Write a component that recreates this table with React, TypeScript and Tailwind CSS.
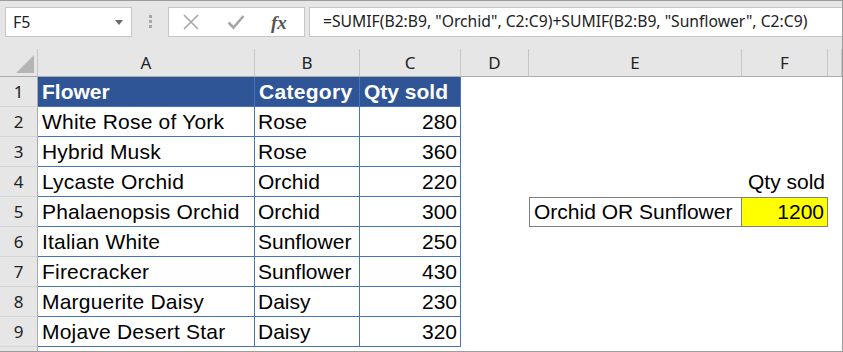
import React from "react";

const ROWS: [string, string, string][] = [
  ["White Rose of York", "Rose", "280"],
  ["Hybrid Musk", "Rose", "360"],
  ["Lycaste Orchid", "Orchid", "220"],
  ["Phalaenopsis Orchid", "Orchid", "300"],
  ["Italian White", "Sunflower", "250"],
  ["Firecracker", "Sunflower", "430"],
  ["Marguerite Daisy", "Daisy", "230"],
  ["Mojave Desert Star", "Daisy", "320"],
];

const COLS = ["A", "B", "C", "D", "E", "F", ""];

const cellFont = { fontFamily: '"Liberation Sans", Arial, sans-serif' };
const uiFont = { fontFamily: '"Noto Sans", "Open Sans", sans-serif' };

function RowHead({ n }: { n: number | string }) {
  return (
    <div
      className="flex h-[30px] items-center justify-center border-r border-b border-r-[#ababab] border-b-[#d4d4d4] bg-[#e6e6e6] text-[17px] text-[#222]"
      style={uiFont}
    >
      {n}
    </div>
  );
}

function Blank() {
  return <div className="h-[30px]" />;
}

export default function App() {
  const filler = (k: string) => [
    <Blank key={k + "d"} />,
    <Blank key={k + "e"} />,
    <Blank key={k + "f"} />,
    <Blank key={k + "g"} />,
  ];

  return (
    <div className="h-[352px] w-[843px] overflow-hidden border-t border-r border-b border-[#9c9c9c] bg-white">
      {/* formula bar */}
      <div className="flex h-[48px] items-start bg-[#e6e6e6] pt-[6px]" style={uiFont}>
        <div className="relative ml-[5px] flex h-[30px] w-[127px] items-center border border-[#c6c6c6] bg-white pl-[7px] text-[16px] text-[#222]">
          F5
          <span className="absolute right-[8px] top-[12px] h-0 w-0 border-x-[4px] border-t-[5px] border-x-transparent border-t-[#6b6b6b]" />
        </div>
        <div className="ml-[17px] mt-[8px] flex flex-col gap-[2px]">
          <span className="h-[3px] w-[3px] bg-[#a6a6a6]" />
          <span className="h-[3px] w-[3px] bg-[#a6a6a6]" />
          <span className="h-[3px] w-[3px] bg-[#a6a6a6]" />
        </div>
        <div className="ml-[16px] flex h-[30px] w-[137px] items-center border border-[#c6c6c6] bg-white">
          <svg width="18" height="18" viewBox="0 0 18 18" className="ml-[13px]">
            <path d="M2 2 L16 16 M16 2 L2 16" stroke="#a6a6a6" strokeWidth="1.6" fill="none" />
          </svg>
          <svg width="18" height="16" viewBox="0 0 18 16" className="ml-[27px]">
            <path d="M1.5 8.5 L6.5 13.5 L16.5 2" stroke="#a6a6a6" strokeWidth="2.6" fill="none" />
          </svg>
          <span
            className="ml-[26px] text-[19px] font-bold italic leading-none text-[#555]"
            style={{ fontFamily: '"Liberation Serif", "Times New Roman", serif' }}
          >
            fx
          </span>
        </div>
        <div className="ml-[4px] flex h-[30px] flex-1 items-center border border-r-0 border-[#c6c6c6] bg-white pl-[13px] text-[15.7px] text-[#222]">
          =SUMIF(B2:B9, "Orchid", C2:C9)+SUMIF(B2:B9, "Sunflower", C2:C9)
        </div>
      </div>

      {/* sheet */}
      <div className="grid grid-cols-[38px_217px_105px_101px_68px_213px_86px_1fr]">
        {/* column headers */}
        <div className="relative h-[28px] border-r border-b border-r-[#c6c6c6] border-b-[#ababab] bg-[#e6e6e6]">
          <span className="absolute right-[3px] bottom-[3px] h-0 w-0 border-b-[18px] border-l-[18px] border-b-[#b5b5b5] border-l-transparent" />
        </div>
        {COLS.map((c, i) => (
          <div
            key={i}
            className="flex h-[28px] items-center justify-center border-r border-b border-r-[#c6c6c6] border-b-[#ababab] bg-[#e6e6e6] text-[17px] text-[#222]"
            style={uiFont}
          >
            {c}
          </div>
        ))}

        {/* row 1: table header */}
        <RowHead n={1} />
        <div
          className="flex h-[30px] items-center border-r border-b border-[#4472c4] bg-[#2f5597] pl-[4px] text-[21px] font-bold text-white"
          style={cellFont}
        >
          Flower
        </div>
        <div
          className="flex h-[30px] items-center border-r border-b border-[#4472c4] bg-[#2f5597] pl-[4px] text-[21px] font-bold tracking-[0.3px] text-white"
          style={cellFont}
        >
          Category
        </div>
        <div
          className="flex h-[30px] items-center border-r border-b border-[#4472c4] bg-[#2f5597] pl-[4px] text-[21px] font-bold text-white"
          style={cellFont}
        >
          Qty sold
        </div>
        {filler("r1")}

        {ROWS.map((r, i) => {
          const n = i + 2;
          return (
            <React.Fragment key={n}>
              <RowHead n={n} />
              <div
                className="flex h-[30px] items-center border-r border-b border-[#4472c4] pl-[4px] text-[21px] tracking-[0.2px] text-black"
                style={cellFont}
              >
                {r[0]}
              </div>
              <div
                className="flex h-[30px] items-center border-r border-b border-[#4472c4] pl-[3px] text-[21px] text-black"
                style={cellFont}
              >
                {r[1]}
              </div>
              <div
                className="flex h-[30px] items-center justify-end border-r border-b border-[#4472c4] pr-[3px] text-[21px] text-black"
                style={cellFont}
              >
                {r[2]}
              </div>
              <Blank />
              {n === 4 ? (
                <>
                  <Blank />
                  <div
                    className="flex h-[30px] items-center justify-end pr-[3px] text-[21px] text-black"
                    style={cellFont}
                  >
                    Qty sold
                  </div>
                </>
              ) : n === 5 ? (
                <>
                  <div
                    className="flex h-[30px] items-center border border-[#808080] pl-[4px] text-[21px] text-black"
                    style={cellFont}
                  >
                    Orchid OR Sunflower
                  </div>
                  <div
                    className="flex h-[30px] items-center justify-end border-y border-r border-[#808080] bg-[#ffff00] pr-[3px] text-[21px] text-black"
                    style={cellFont}
                  >
                    1200
                  </div>
                </>
              ) : (
                <>
                  <Blank />
                  <Blank />
                </>
              )}
              <Blank />
            </React.Fragment>
          );
        })}

        {/* row 10, cut off */}
        <div className="h-[10px] border-r border-[#ababab] bg-[#e6e6e6]" />
      </div>
    </div>
  );
}
